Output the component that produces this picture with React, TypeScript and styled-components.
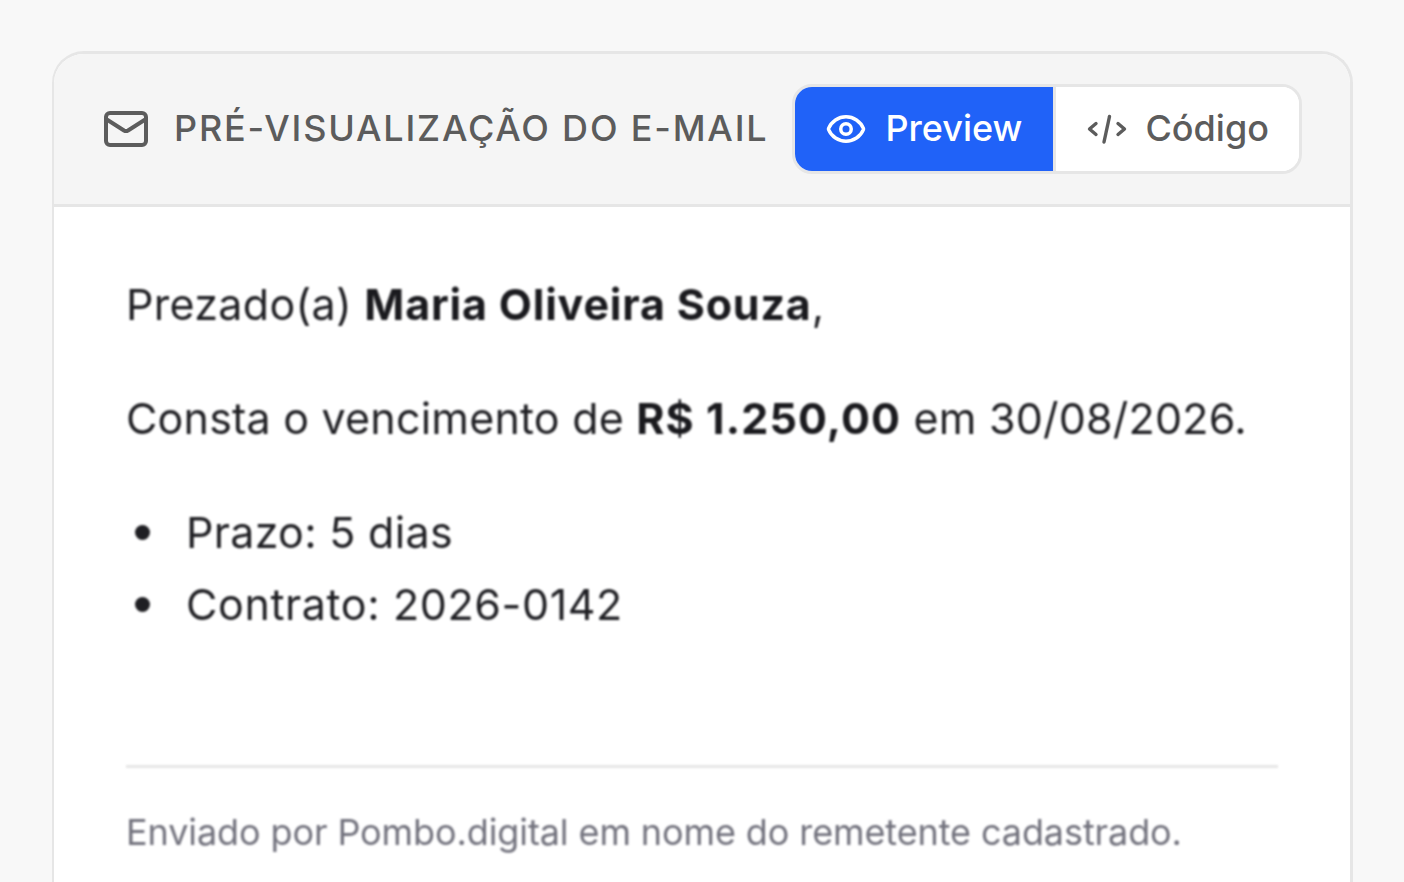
import React from "react";
import styled, { createGlobalStyle } from "styled-components";
import { Mail, Eye } from "lucide-react";

const Global = createGlobalStyle`
  html, body { margin: 0; padding: 0; height: 882px; overflow: hidden; background: #f8f8f8; }
  body { font-family: Inter, "Liberation Sans", sans-serif; }
`;

const Page = styled.main`
  height: 882px;
  box-sizing: border-box;
  display: flex;
  padding: 51px 51px 0 52px;
`;

const Card = styled.section`
  flex: 1;
  min-width: 0;
  border-style: solid;
  border-color: #e6e6e6;
  border-width: 3px 3px 0 2px;
  border-radius: 32px 32px 0 0;
  background: #fff;
  overflow: hidden;
`;

const Header = styled.header`
  display: flex;
  align-items: center;
  justify-content: space-between;
  height: 150px;
  padding: 0 48px 0 48px;
  background: #f5f5f5;
  border-bottom: 3px solid #e6e6e6;
`;

const Title = styled.div`
  display: flex;
  align-items: center;
  gap: 24px;
  color: #5c5c5c;
`;

const TitleText = styled.h1`
  margin: 0;
  padding-bottom: 2px;
  font-size: 36px;
  font-weight: 500;
  letter-spacing: 1.8px;
  line-height: 44px;
  white-space: nowrap;
`;

const Toggle = styled.div`
  display: flex;
  height: 84px;
  border: 3px solid #e6e6e6;
  border-radius: 20px;
  overflow: hidden;
  background: #fff;
`;

const ToggleButton = styled.button<{ $active?: boolean }>`
  display: flex;
  align-items: center;
  gap: ${(p) => (p.$active ? "19px" : "18px")};
  padding: ${(p) => (p.$active ? "0 31px 0 30px" : "0 30px 0 31px")};
  border: 0;
  border-left: ${(p) => (p.$active ? "0" : "3px solid #e6e6e6")};
  background: ${(p) => (p.$active ? "#2062f8" : "#fff")};
  color: ${(p) => (p.$active ? "#fff" : "#5c5c5c")};
  font-family: inherit;
  font-size: 36px;
  font-weight: 500;
`;

const ButtonLabel = styled.span`
  padding-bottom: 2px;
`;

const Body = styled.div`
  padding: 61px 72px 0 72px;
  color: #1f1f23;
  font-size: 43px;
  line-height: 72px;
  letter-spacing: 0.3px;
  filter: blur(0.85px);
`;

const Para = styled.p<{ $tight?: boolean }>`
  margin: 0 0 42px;
  white-space: nowrap;
  letter-spacing: ${(p) => (p.$tight ? "0.2px" : "0.3px")};

  strong {
    font-weight: 700;
    letter-spacing: ${(p) => (p.$tight ? "1.1px" : "0.8px")};
    color: #1a1a1e;
  }
`;

const List = styled.ul`
  margin: 0;
  padding: 0;
  list-style: none;
`;

const Item = styled.li<{ $wide?: boolean }>`
  display: flex;
  align-items: center;
  gap: 36px;
  padding-left: 9px;
  letter-spacing: ${(p) => (p.$wide ? "0.6px" : "0.3px")};
`;

const Bullet = styled.span`
  flex: none;
  width: 15px;
  height: 15px;
  border-radius: 50%;
  background: #1f1f23;
`;

const Divider = styled.hr`
  margin: 125px 0 0;
  border: 0;
  border-top: 3px solid #e6e6e6;
`;

const Footer = styled.p`
  margin: 40px 0 0;
  font-size: 36px;
  line-height: 48px;
  letter-spacing: -0.1px;
  color: #72727d;
  white-space: nowrap;
`;

const CodeIcon = () => (
  <svg
    width={40}
    height={40}
    viewBox="0 0 40 40"
    fill="none"
    stroke="currentColor"
    strokeWidth={3.4}
    strokeLinecap="round"
    strokeLinejoin="round"
  >
    <path d="M9 14.5 2.5 20 9 25.5" />
    <path d="M31 14.5 37.5 20 31 25.5" />
    <path d="M22.5 7.5 17 33" />
  </svg>
);

export default function App() {
  return (
    <>
      <Global />
      <Page>
        <Card>
          <Header>
            <Title>
              <Mail size={48} strokeWidth={2} />
              <TitleText>PRÉ-VISUALIZAÇÃO DO E-MAIL</TitleText>
            </Title>
            <Toggle>
              <ToggleButton $active>
                <Eye size={42} strokeWidth={2} />
                <ButtonLabel>Preview</ButtonLabel>
              </ToggleButton>
              <ToggleButton>
                <CodeIcon />
                <ButtonLabel>Código</ButtonLabel>
              </ToggleButton>
            </Toggle>
          </Header>
          <Body>
            <Para>
              Prezado(a) <strong>Maria Oliveira Souza</strong>,
            </Para>
            <Para $tight>
              Consta o vencimento de <strong>R$ 1.250,00</strong> em 30/08/2026.
            </Para>
            <List>
              <Item>
                <Bullet />
                Prazo: 5 dias
              </Item>
              <Item $wide>
                <Bullet />
                Contrato: 2026-0142
              </Item>
            </List>
            <Divider />
            <Footer>Enviado por Pombo.digital em nome do remetente cadastrado.</Footer>
          </Body>
        </Card>
      </Page>
    </>
  );
}
